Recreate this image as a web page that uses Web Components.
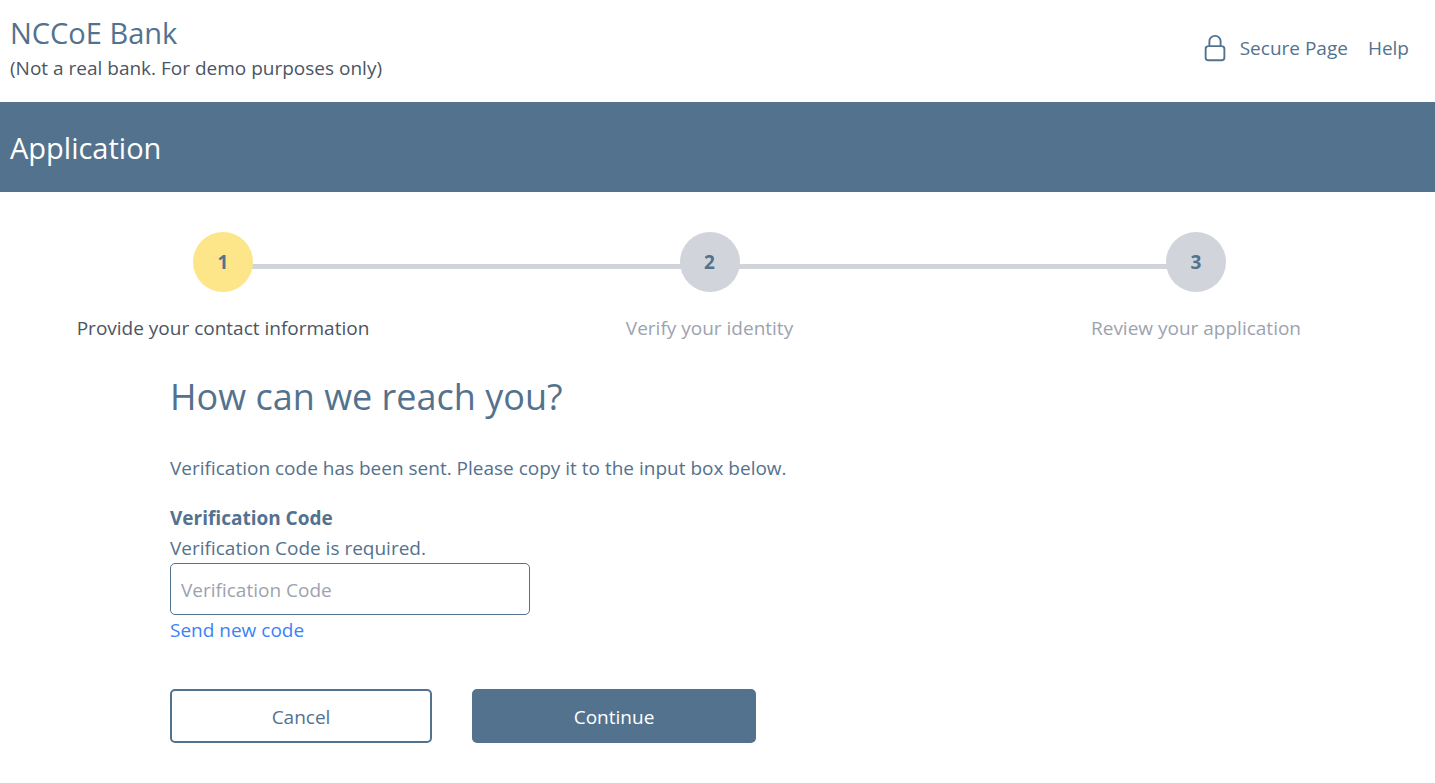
<!DOCTYPE html>
<html lang="en">
<head>
<meta charset="utf-8">
<title>NCCoE Bank</title>
<style>
  :root {
    --brand: #53728e;
    --ink: #4b5563;
    --muted: #9ca3af;
    --track: #d1d5db;
    --accent: #fde68a;
    --link: #3b82f6;
    --radius: 5px;
  }
  body {
    margin: 0;
    background: #fff;
    color: var(--brand);
    font: 19px/30px "Segoe UI", "Open Sans", "Noto Sans", sans-serif;
  }
</style>
</head>
<body>
<bank-app></bank-app>

<script>
  function define(name, html, setup) {
    const template = document.createElement("template");
    template.innerHTML = html;
    customElements.define(name, class extends HTMLElement {
      constructor() {
        super();
        this.attachShadow({ mode: "open" }).append(template.content.cloneNode(true));
      }
      connectedCallback() {
        if (setup) setup(this, this.shadowRoot);
      }
    });
  }

  define("bank-header", `
    <style>
      :host { display: block; }
      header { display: flex; justify-content: space-between; align-items: center; padding: 13px 26px 19px 10px; }
      .name { margin: 0; font-size: 29px; line-height: 40px; }
      .note { margin: 0; color: var(--ink); }
      nav { display: flex; align-items: center; gap: 20px; }
      a { display: flex; align-items: center; gap: 10px; color: inherit; text-decoration: none; }
      svg { display: block; width: 30px; height: 30px; }
    </style>
    <header>
      <div>
        <p class="name">NCCoE Bank</p>
        <p class="note">(Not a real bank. For demo purposes only)</p>
      </div>
      <nav>
        <a href="#secure">
          <svg viewBox="0 0 24 24" fill="none" stroke="currentColor" stroke-width="1.5" stroke-linecap="round" stroke-linejoin="round" aria-hidden="true">
            <path d="M16.5 10.5V6.75a4.5 4.5 0 1 0-9 0v3.75m-.75 11.25h10.5a2.25 2.25 0 0 0 2.25-2.25v-6.75a2.25 2.25 0 0 0-2.25-2.25H6.75a2.25 2.25 0 0 0-2.25 2.25v6.75a2.25 2.25 0 0 0 2.25 2.25z"/>
          </svg>
          <span>Secure Page</span>
        </a>
        <a href="#help">Help</a>
      </nav>
    </header>`);

  define("bank-banner", `
    <style>
      :host { display: block; background: var(--brand); color: #fff; padding: 26px 10px 24px; }
      h1 { margin: 0; font-size: 29px; line-height: 40px; font-weight: 400; }
    </style>
    <h1><slot></slot></h1>`);

  define("bank-step", `
    <style>
      :host { display: flex; flex-direction: column; align-items: center; gap: 21px; grid-row: 1; color: var(--muted); text-align: center; z-index: 1; }
      :host([current]) { color: var(--ink); }
      .dot { display: grid; place-items: center; width: 60px; height: 60px; border-radius: 50%; background: var(--track); color: var(--brand); font-weight: 700; }
      :host([current]) .dot { background: var(--accent); }
    </style>
    <span class="dot"></span>
    <span><slot></slot></span>`,
    (host, root) => {
      host.setAttribute("role", "listitem");
      root.querySelector(".dot").textContent = host.getAttribute("number");
    });

  define("bank-stepper", `
    <style>
      :host { display: block; padding: 40px 89px 0 73px; }
      .steps { --col: 300px; display: grid; grid-template-columns: var(--col) 1fr var(--col) 1fr var(--col); }
      .steps::before, .steps::after { content: ""; grid-row: 1; height: 5px; margin: 32px calc(var(--col) / 2) 0; background: var(--track); }
      .steps::before { grid-column: 1 / 4; }
      .steps::after { grid-column: 3 / 6; }
      ::slotted(:nth-child(1)) { grid-column: 1; }
      ::slotted(:nth-child(2)) { grid-column: 3; }
      ::slotted(:nth-child(3)) { grid-column: 5; }
    </style>
    <div class="steps" role="list"><slot></slot></div>`);

  define("bank-field", `
    <style>
      :host { display: block; }
      label { display: block; font-weight: 700; }
      p { margin: 0; }
      input { display: block; box-sizing: border-box; width: 360px; max-width: 100%; height: 52px; margin: 0; padding: 1px 10px 0; border: 1px solid var(--brand); border-radius: var(--radius); background: #fff; color: var(--ink); font: inherit; outline: none; }
      input::placeholder { color: var(--muted); opacity: 1; }
    </style>
    <label for="field"></label>
    <p id="hint"></p>
    <input id="field" type="text" aria-describedby="hint">`,
    (host, root) => {
      const label = host.getAttribute("label");
      root.querySelector("label").textContent = label;
      root.querySelector("p").textContent = host.getAttribute("hint");
      root.querySelector("input").placeholder = label;
    });

  define("bank-button", `
    <style>
      :host { display: block; }
      button { box-sizing: border-box; width: 262px; height: 54px; padding: 2px 0 0; border: 2px solid var(--brand); border-radius: var(--radius); background: #fff; color: var(--brand); font: inherit; cursor: pointer; }
      :host([primary]) button { width: 284px; background: var(--brand); color: #fff; }
    </style>
    <button type="button"><slot></slot></button>`);

  define("verify-form", `
    <style>
      :host { display: block; padding: 24px 170px 40px; }
      h2 { margin: 0 0 26px; font-size: 36px; line-height: 60px; font-weight: 400; }
      p { margin: 0 0 20px; }
      a { color: var(--link); text-decoration: none; }
      .actions { display: flex; flex-wrap: wrap; gap: 40px; margin-top: 44px; }
    </style>
    <h2>How can we reach you?</h2>
    <p>Verification code has been sent. Please copy it to the input box below.</p>
    <bank-field label="Verification Code" hint="Verification Code is required."></bank-field>
    <a href="#resend">Send new code</a>
    <div class="actions">
      <bank-button>Cancel</bank-button>
      <bank-button primary>Continue</bank-button>
    </div>`);

  define("bank-app", `
    <style>:host { display: block; }</style>
    <bank-header></bank-header>
    <main>
      <bank-banner>Application</bank-banner>
      <bank-stepper>
        <bank-step number="1" current>Provide your contact information</bank-step>
        <bank-step number="2">Verify your identity</bank-step>
        <bank-step number="3">Review your application</bank-step>
      </bank-stepper>
      <verify-form></verify-form>
    </main>`);
</script>
</body>
</html>
